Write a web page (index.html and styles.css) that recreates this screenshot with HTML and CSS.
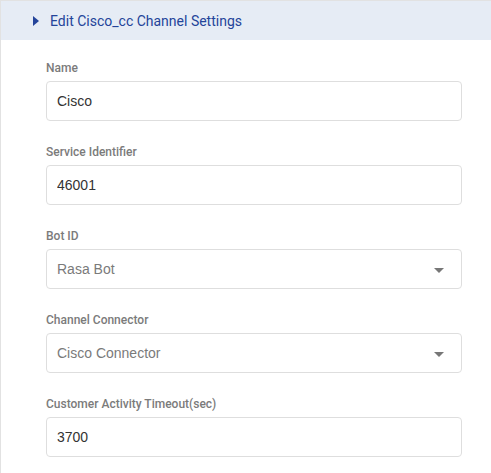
FILE: index.html
```html
<!DOCTYPE html>
<html lang="en">
<head>
    <meta charset="UTF-8">
    <title>Edit Channel Settings</title>
    <link rel="stylesheet" href="styles.css">
</head>
<body>
    <div class="panel">
        <div class="panel-header">
            <span class="arrow"></span>
            <span class="panel-title">Edit Cisco_cc Channel Settings</span>
        </div>
        <form class="panel-body">
            <div class="field">
                <label>Name</label>
                <input type="text" value="Cisco">
            </div>
            <div class="field">
                <label>Service Identifier</label>
                <input type="text" value="46001">
            </div>
            <div class="field">
                <label>Bot ID</label>
                <div class="select">
                    <span>Rasa Bot</span>
                    <span class="caret"></span>
                </div>
            </div>
            <div class="field">
                <label>Channel Connector</label>
                <div class="select">
                    <span>Cisco Connector</span>
                    <span class="caret"></span>
                </div>
            </div>
            <div class="field">
                <label>Customer Activity Timeout(sec)</label>
                <input type="text" value="3700">
            </div>
        </form>
    </div>
</body>
</html>
```

FILE: styles.css
```css
body {
    margin: 0;
    font-family: Roboto, "Liberation Sans", Arial, sans-serif;
    background: #fff;
}
.panel {
    border-top: 1px solid #e2e2e2;
    border-left: 1px solid #e2e2e2;
    min-height: 472px;
}
.panel-header {
    height: 39px;
    background: #e6ecf5;
    display: flex;
    align-items: center;
    padding-left: 32px;
}
.arrow {
    width: 0;
    height: 0;
    border-top: 5px solid transparent;
    border-bottom: 5px solid transparent;
    border-left: 6px solid #24449a;
    margin-right: 11px;
}
.panel-title {
    font-size: 14px;
    color: #24449a;
}
.panel-body {
    padding: 20px 29px 0 45px;
}
.field {
    margin-bottom: 23px;
}
.field label {
    display: block;
    font-size: 12px;
    font-weight: 500;
    line-height: 16px;
    color: #7b7b7b;
    margin-bottom: 5px;
}
.field input, .select {
    box-sizing: border-box;
    width: 100%;
    height: 40px;
    border: 1px solid #dedede;
    border-radius: 4px;
    padding: 0 10px;
    font-family: "Liberation Sans", Arial, sans-serif;
    font-size: 14px;
    color: #333;
    outline: none;
}
.select {
    display: flex;
    align-items: center;
    justify-content: space-between;
    color: #7a7a7a;
    padding-right: 17px;
}
.caret {
    width: 0;
    height: 0;
    border-left: 5px solid transparent;
    border-right: 5px solid transparent;
    border-top: 5px solid #777;
    margin-top: 3px;
}
```
